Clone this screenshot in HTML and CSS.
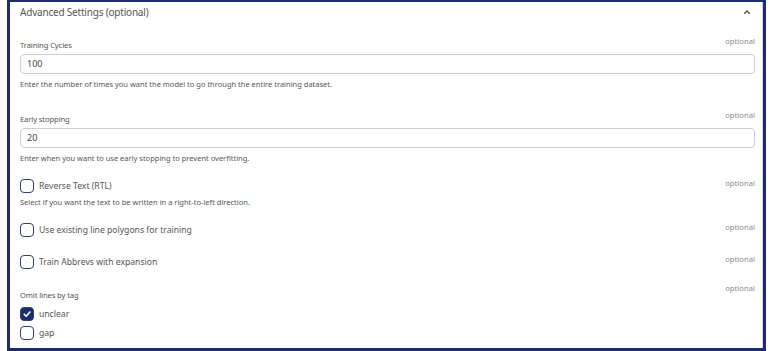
FILE: index.html
```html
<!DOCTYPE html>
<html>
<head>
<meta charset="utf-8">
<link rel="stylesheet" href="styles.css">
</head>
<body>
<div class="frame">
  <div class="card">
    <div class="header">
      <span class="title">Advanced Settings (optional)</span>
      <svg class="chev" width="8" height="6" viewBox="0 0 8 6"><path d="M1.2 4.8 L4 2 L6.8 4.8" fill="none" stroke="#555" stroke-width="1.4"/></svg>
    </div>

    <div class="field f1">
      <div class="row"><span class="label">Training Cycles</span><span class="opt">optional</span></div>
      <div class="input">100</div>
      <div class="help">Enter the number of times you want the model to go through the entire training dataset.</div>
    </div>

    <div class="field f2">
      <div class="row"><span class="label">Early stopping</span><span class="opt">optional</span></div>
      <div class="input">20</div>
      <div class="help">Enter when you want to use early stopping to prevent overfitting.</div>
    </div>

    <div class="field f3">
      <div class="row"><span class="check"><span class="box"></span><span class="clabel">Reverse Text (RTL)</span></span><span class="opt">optional</span></div>
      <div class="help h3">Select if you want the text to be written in a right-to-left direction.</div>
    </div>

    <div class="field f4">
      <div class="row"><span class="check"><span class="box"></span><span class="clabel">Use existing line polygons for training</span></span><span class="opt">optional</span></div>
    </div>

    <div class="field f5">
      <div class="row"><span class="check"><span class="box"></span><span class="clabel">Train Abbrevs with expansion</span></span><span class="opt">optional</span></div>
    </div>

    <div class="field f6">
      <div class="row"><span class="label">Omit lines by tag</span><span class="opt hi">optional</span></div>
      <div class="check opt1"><span class="box on"><svg width="10" height="10" viewBox="0 0 10 10"><path d="M2.2 5.2 L4.2 7.2 L7.9 3" fill="none" stroke="#fff" stroke-width="1.6" stroke-linecap="round" stroke-linejoin="round"/></svg></span><span class="clabel">unclear</span></div>
      <div class="check opt2"><span class="box"></span><span class="clabel">gap</span></div>
    </div>
  </div>
</div>
</body>
</html>
```

FILE: styles.css
```css
html, body {
  margin: 0;
  padding: 0;
  background: #fff;
}
body {
  font-family: "Noto Sans", "Open Sans", sans-serif;
  color: #555;
}
.frame {
  margin-left: 7px;
  width: 753px;
  height: 346px;
  border: 3px solid #1d2c6c;
  border-top-width: 2px;
  box-sizing: content-box;
  overflow: hidden;
}
.card {
  height: 100%;
  border-right: 1px solid #d9d9d9;
  padding: 0 7px 0 10px;
  box-sizing: border-box;
}
.header {
  display: flex;
  justify-content: space-between;
  align-items: center;
  height: 20px;
}
.title {
  font-size: 10px;
  letter-spacing: -0.2px;
  line-height: 14px;
  color: #555;
}
.chev { margin-right: 4px; }
.row {
  display: flex;
  justify-content: space-between;
  align-items: flex-end;
}
.label {
  font-size: 7.6px;
  letter-spacing: -0.1px;
  line-height: 11px;
  color: #555;
}
.opt {
  font-size: 7.7px;
  line-height: 11px;
  color: #8a8a8a;
  margin-bottom: 4px;
}
.opt.hi { margin-bottom: 7px; }
.input {
  margin-top: 3px;
  height: 20px;
  border: 1px solid #c9ced8;
  border-radius: 4px;
  box-sizing: border-box;
  font-size: 9px;
  line-height: 18px;
  padding-left: 6px;
  color: #444;
}
.help {
  font-size: 7.5px;
  line-height: 10px;
  color: #555;
  margin-top: 5px;
}
.f1 { margin-top: 14px; }
.f2 { margin-top: 21px; }
.f3 { margin-top: 15px; }
.f4 { margin-top: 15px; }
.f5 { margin-top: 17px; }
.f6 { margin-top: 14px; }
.h3 { margin-top: 4px; }
.check {
  display: flex;
  align-items: center;
  gap: 5px;
}
.box {
  width: 14px;
  height: 14px;
  border: 1.3px solid #2e3f7a;
  border-radius: 4px;
  box-sizing: border-box;
  display: flex;
  align-items: center;
  justify-content: center;
}
.box.on { background: #1d2c6c; }
.clabel {
  font-size: 8.6px;
  line-height: 14px;
  color: #555;
}
.opt1 { margin-top: 6px; }
.opt2 { margin-top: 5px; }
```
